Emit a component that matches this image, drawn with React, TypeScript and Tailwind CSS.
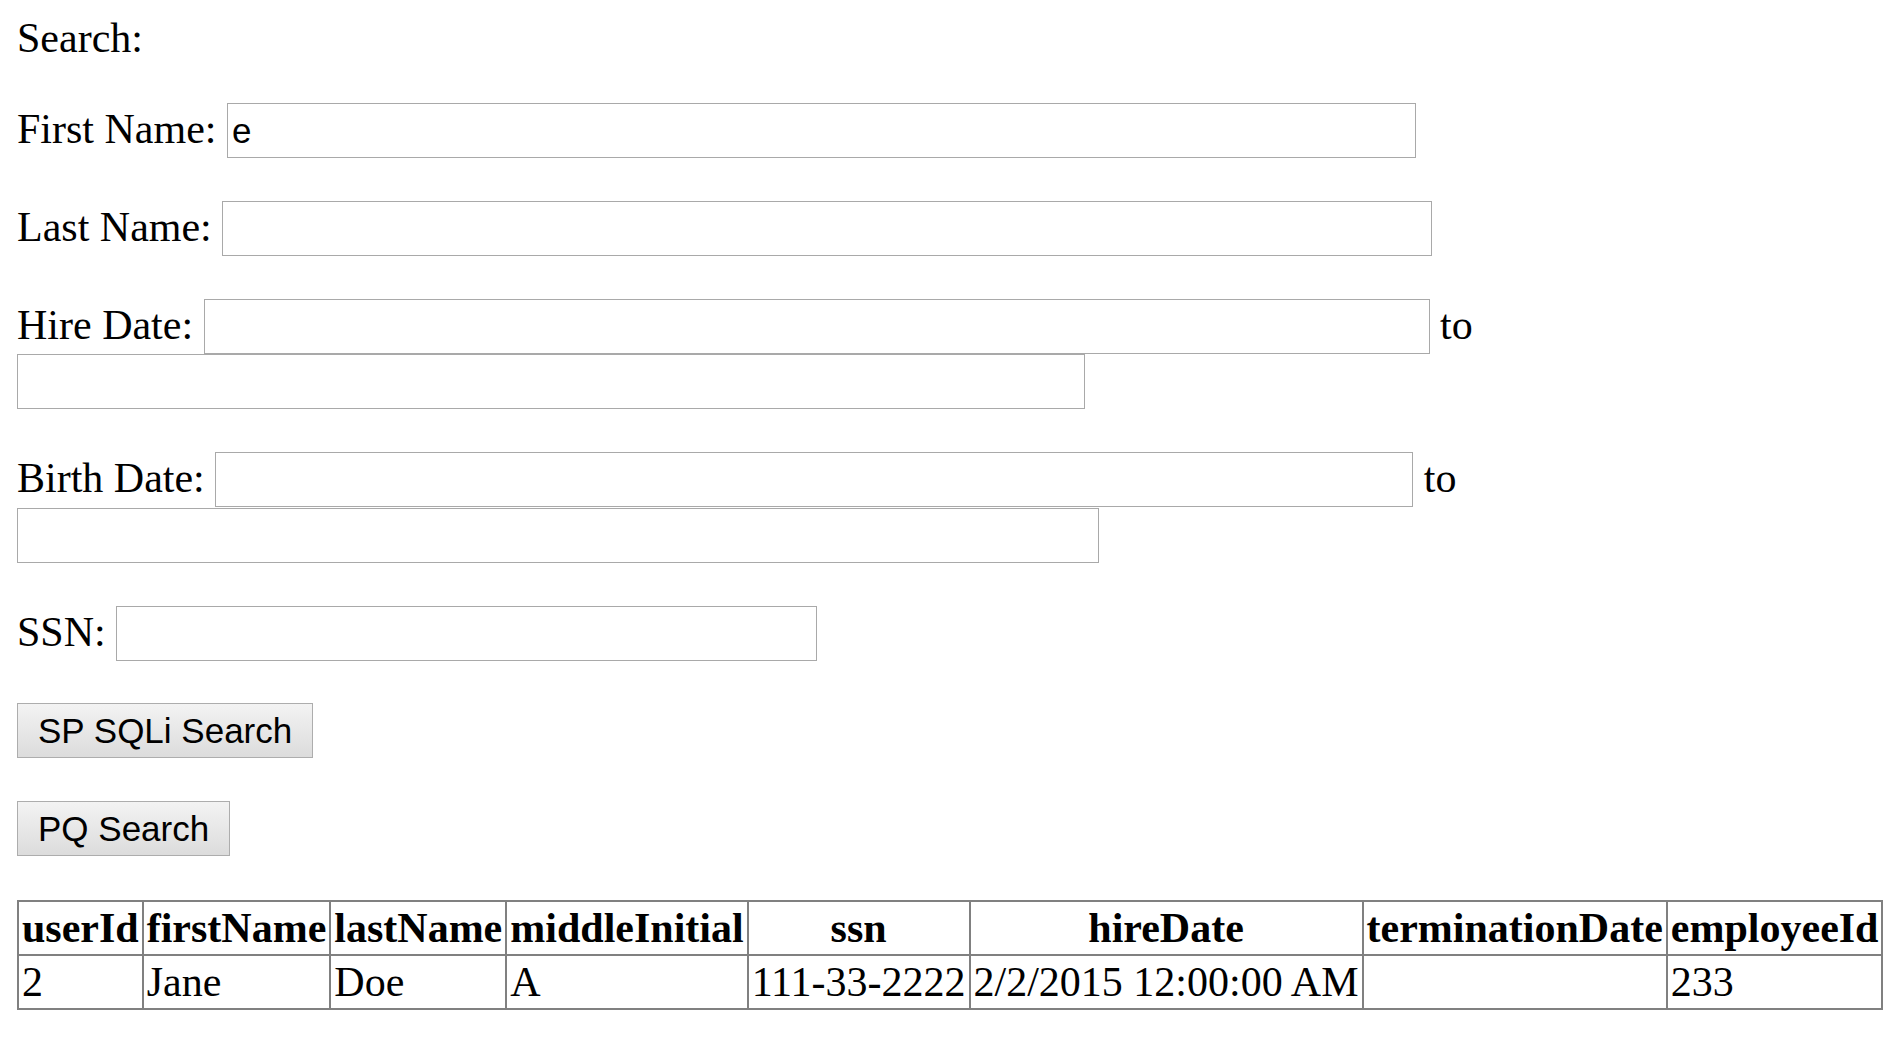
import React from "react";

const inputCls =
  "inline-block h-[55px] border border-[#a9a9a9] bg-white px-[4px] align-baseline font-['Liberation_Sans',Arial,sans-serif] text-[35px] leading-[normal] text-black outline-none";

const btnCls =
  "block h-[55px] border border-[#adadad] bg-gradient-to-b from-[#f3f3f3] to-[#dcdcdc] px-[20px] font-['Liberation_Sans',Arial,sans-serif] text-[35px] leading-none text-black";

const headers = [
  "userId",
  "firstName",
  "lastName",
  "middleInitial",
  "ssn",
  "hireDate",
  "terminationDate",
  "employeeId",
];
const row = ["2", "Jane", "Doe", "A", "111-33-2222", "2/2/2015 12:00:00 AM", "", "233"];

export default function App() {
  return (
    <div className="min-h-[1042px] bg-white pt-[14px] pl-[17px] font-['Liberation_Serif','Times_New_Roman',serif] text-[42px] leading-[48px] text-black">
      <div>Search:</div>

      <div className="mt-[41px] flex h-[55px] items-baseline whitespace-pre">
        <span>First Name: </span>
        <input className={`${inputCls} w-[1189px]`} defaultValue="e" />
      </div>

      <div className="mt-[43px] flex h-[55px] items-baseline whitespace-pre">
        <span>Last Name: </span>
        <input className={`${inputCls} w-[1210px]`} />
      </div>

      <div className="mt-[43px]">
        <div className="flex h-[55px] items-baseline whitespace-pre">
          <span>Hire Date: </span>
          <input className={`${inputCls} w-[1226px]`} />
          <span> to</span>
        </div>
        <div className="flex h-[55px]">
          <input className={`${inputCls} w-[1068px]`} />
        </div>
      </div>

      <div className="mt-[43px]">
        <div className="flex h-[55px] items-baseline whitespace-pre">
          <span>Birth Date: </span>
          <input className={`${inputCls} w-[1198px]`} />
          <span> to</span>
        </div>
        <div className="mt-[1px] flex h-[55px]">
          <input className={`${inputCls} w-[1082px]`} />
        </div>
      </div>

      <div className="mt-[43px] flex h-[55px] items-baseline whitespace-pre">
        <span>SSN: </span>
        <input className={`${inputCls} w-[701px]`} />
      </div>

      <div className="mt-[42px]">
        <button className={btnCls}>SP SQLi Search</button>
      </div>

      <div className="mt-[43px]">
        <button className={btnCls}>PQ Search</button>
      </div>

      <table className="mt-[44px] border-collapse border-2 border-[#808080]">
        <thead>
          <tr>
            {headers.map((h) => (
              <th
                key={h}
                className="border-2 border-[#808080] px-[3px] py-[2px] text-center align-middle font-bold leading-[48px]"
              >
                {h}
              </th>
            ))}
          </tr>
        </thead>
        <tbody>
          <tr>
            {row.map((c, i) => (
              <td
                key={i}
                className="border-2 border-[#808080] px-[3px] py-[2px] text-left align-middle leading-[48px]"
              >
                {c}
              </td>
            ))}
          </tr>
        </tbody>
      </table>
    </div>
  );
}
